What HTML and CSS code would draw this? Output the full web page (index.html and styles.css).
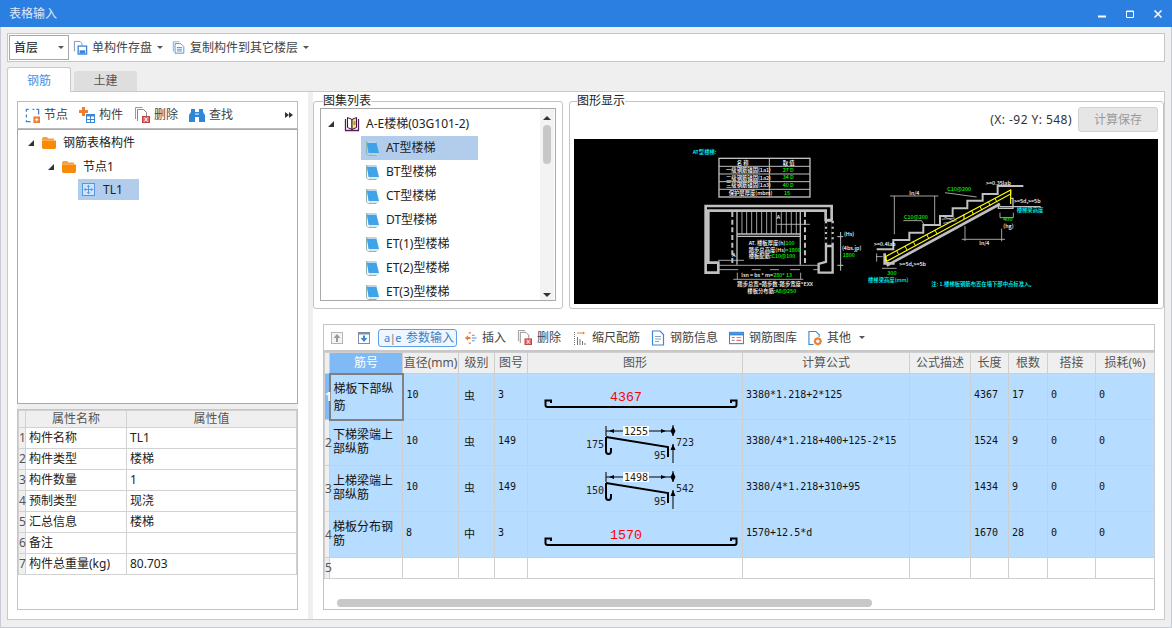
FILE: index.html
```html
<!DOCTYPE html>
<html lang="zh-CN">
<head>
    <meta charset="UTF-8">
    <title>表格输入</title>
    <link rel="stylesheet" href="styles.css">
</head>
<body>
    <!-- Shared icons -->
    <svg class="icon-defs" width="0" height="0">
        <symbol id="ic-save" viewBox="0 0 16 16">
            <path d="M1.500 12V1.500h6l2 2V6" fill="#fff" stroke="#7c93ad"/>
            <rect x="5.500" y="6.500" width="9" height="8.500" fill="#fff" stroke="#3a87d8" stroke-width="1.400"/>
            <rect x="7" y="11" width="6" height="3.500" fill="#3a87d8"/>
        </symbol>
        <symbol id="ic-copy" viewBox="0 0 16 16">
            <path d="M1.500 12.500V1.500h7" fill="none" stroke="#8ba0b8"/>
            <path d="M3.500 14.500V3.500h6.500l3.500 3.500v7.500z" fill="#fff" stroke="#4a8ad0"/>
            <path d="M5.500 8h6M5.500 10h6M5.500 12h6" stroke="#4a8ad0"/>
        </symbol>
        <symbol id="ic-node" viewBox="0 0 16 16">
            <path d="M4 1.500H1.500V4M1.500 7v3M1.500 13v1.500H6M8 1.500h2M12 1.500h2.500V7" fill="none" stroke="#3a87d8" stroke-width="1.400"/>
            <rect x="9" y="9" width="7" height="7" fill="#ef7d2e"/>
            <path d="M12.500 10.500v4M10.500 12.500h4" stroke="#fff"/>
        </symbol>
        <symbol id="ic-comp" viewBox="0 0 16 16">
            <path d="M3 0h3v3h3v3H6v3H3V6H0V3h3z" fill="#ef7d2e"/>
            <rect x="7.500" y="7.500" width="8" height="8" fill="#fff" stroke="#3a87d8"/>
            <path d="M7.500 8.500h8" stroke="#3a87d8" stroke-width="2"/>
            <path d="M7.500 12.500h8M11.500 9v6" stroke="#3a87d8"/>
        </symbol>
        <symbol id="ic-del" viewBox="0 0 16 16">
            <path d="M1.500 12V.5h7" fill="none" stroke="#9a9a9a"/>
            <path d="M3.500 14V2.500h6l3 3V9" fill="#fff" stroke="#8a8a8a"/>
            <rect x="8.500" y="9.500" width="7" height="6" fill="#e06a6a" stroke="#c04444"/>
            <path d="M10.500 10.500l3 4M13.500 10.500l-3 4" stroke="#fff"/>
        </symbol>
        <symbol id="ic-find" viewBox="0 0 16 16">
            <path d="M2 2h4v3h4V2h4v3l2 3v7h-6V10H6v5H0V8l2-3z" fill="#2f87d8"/>
            <path d="M6 7h4" stroke="#fff"/>
        </symbol>
        <symbol id="ic-folder" viewBox="0 0 14 12">
            <path d="M0 1.500 1 0h4l1.500 1.500H12v2H0z" fill="#f9a13a"/>
            <path d="M0 3.500h14v7l-1 1.500H1l-1-1.500z" fill="#f98908"/>
        </symbol>
        <symbol id="ic-tl" viewBox="0 0 14 14">
            <rect x=".5" y=".5" width="13" height="13" fill="#cfe3fa" stroke="#4a94e4"/>
            <path d="M7 2.500v9M2.500 7h9M5.500 4 7 2.500 8.500 4M5.500 10 7 11.500 8.500 10M4 5.500 2.500 7 4 8.500M10 5.500 11.500 7 10 8.500" fill="none" stroke="#4a94e4"/>
        </symbol>
        <symbol id="ic-book" viewBox="0 0 16 16">
            <path d="M1.500 3v11.500h13V3" fill="#fff" stroke="#5a1d5e" stroke-width="1.300"/>
            <path d="M3.500 1.500 8 3.500v10l-4.500-2z" fill="#fff" stroke="#3a1540"/>
            <path d="M8 3.500l4.500-2v10L8 13.500z" fill="#f5e56a" stroke="#3a1540"/>
            <path d="M9.500 6h2M9.500 8h2" stroke="#3a1540" stroke-width=".8"/>
        </symbol>
        <symbol id="ic-sheet" viewBox="0 0 15 16">
            <path d="M1.500 1h9.500L14 13H3.500z" fill="#3ea3e8"/>
            <path d="M2 1h9l.6 2H2.200z" fill="#b9d5e8"/>
            <path d="M1.500 1v13l2 1.500h8" fill="none" stroke="#92b4a8"/>
            <path d="M3.500 14h10.500" stroke="#c4d6c4"/>
        </symbol>
        <symbol id="ic-up" viewBox="0 0 12 12">
            <rect x=".5" y=".5" width="11" height="11" fill="#f4f4f4" stroke="#b5b5b5"/>
            <path d="M6 2 2.500 6H5v4h2V6h2.500z" fill="#9a9a9a"/>
        </symbol>
        <symbol id="ic-down" viewBox="0 0 12 12">
            <rect x=".5" y=".5" width="11" height="11" fill="#fff" stroke="#7e8ea0"/>
            <path d="M.5.500h11v2H.5z" fill="#7e8ea0"/>
            <path d="M6 10 2.500 6H5V3.500h2V6h2.500z" fill="#3a87d8"/>
        </symbol>
        <symbol id="ic-insert" viewBox="0 0 14 14">
            <path d="M1 7l3.500-3v2H7v2H4.500v2z" fill="#ef7d2e"/>
            <path d="M5 1.500h2.500M5 12.500h2.500" stroke="#ef7d2e" stroke-width="1.200"/>
            <path d="M8.500 7h5M8.500 4h3M8.500 10h3" stroke="#4a94e4" stroke-width="1.200"/>
        </symbol>
        <symbol id="ic-scale" viewBox="0 0 14 14">
            <path d="M1.500 1v13" stroke="#777" stroke-dasharray="1 1"/>
            <path d="M4 2h7" stroke="#ef7d2e"/>
            <path d="M10 .5 12 2l-2 1.500z" fill="#ef7d2e"/>
            <path d="M4.500 6v8M7 8v6M9.500 10v4M12 12v2" stroke="#777"/>
        </symbol>
        <symbol id="ic-info" viewBox="0 0 14 16">
            <path d="M1.500 1h7.500l3.500 3.500v10.500h-11z" fill="#fff" stroke="#3a87d8" stroke-width="1.200"/>
            <path d="M4 6.500h6M4 9h6M4 11.500h4" stroke="#8aa0b8"/>
        </symbol>
        <symbol id="ic-lib" viewBox="0 0 16 14">
            <rect x=".5" y="1" width="15" height="12" fill="#fff" stroke="#3a87d8" stroke-width="1.200"/>
            <path d="M.5 3h15" stroke="#3a87d8" stroke-width="2.400"/>
            <path d="M3 6.500h3M3 9.500h3" stroke="#777"/>
            <path d="M8 6.500h5" stroke="#ef7d2e"/>
            <path d="M8 9.500h5" stroke="#d44"/>
        </symbol>
        <symbol id="ic-other" viewBox="0 0 15 16">
            <path d="M6 15H1V1h7.500L12 4.500V7" fill="#fff" stroke="#3a87d8" stroke-width="1.200"/>
            <circle cx="10.500" cy="11.500" r="3" fill="none" stroke="#ef7d2e" stroke-width="2.200"/>
            <path d="M10.500 7v9M6 11.500h9M7.500 8.500l6 6M13.500 8.500l-6 6" stroke="#ef7d2e" stroke-dasharray="1.400 6.200"/>
        </symbol>
        <symbol id="bar-flat" viewBox="0 0 215 45">
            <path d="M23 29v-2.500h-5.500V31q0 2 2 2h187q2 0 2-2v-4.500h-5.500V29" fill="none" stroke="#000" stroke-width="2"/>
        </symbol>
        <symbol id="bar-bent" viewBox="0 0 215 45">
            <path d="M78 17 140 27v10" fill="none" stroke="#000" stroke-width="2"/>
            <path d="M78 17v14q0 3 2.500 3t2.500-3v-3" fill="none" stroke="#000" stroke-width="2"/>
            <path d="M78 6V16M78 11h67M145 5v11M145 24v19" fill="none" stroke="#000"/>
            <path d="M81 11l5-2v4zM138 11l-5-2v4z" fill="#000"/>
            <path d="M145 6l-2.500 5h5zM145 16l-2.500-5h5zM145 24l-2.500 6h5z" fill="#000"/>
        </symbol>
    </svg>

    <div class="window">
        <div class="titlebar">
            <span class="title">表格输入</span>
            <div class="win-buttons">
                <svg width="8" height="8" viewBox="0 0 8 8"><path d="M0 6.500h8" stroke="#fff" stroke-width="2"/></svg>
                <svg width="8" height="8" viewBox="0 0 8 8"><path d="M.5 1h7v6.500h-7z" fill="none" stroke="#fff"/><path d="M0 1.500h8" stroke="#fff"/></svg>
                <svg width="8" height="8" viewBox="0 0 8 8"><path d="M.5 .5l7 7M7.500 .5l-7 7" stroke="#fff" stroke-width="1.500"/></svg>
            </div>
        </div>

        <!-- Floor toolbar -->
        <div class="top-toolbar">
            <div class="floor-select">首层<span class="caret"></span></div>
            <div class="top-item">
                <svg class="icon" width="15" height="15"><use href="#ic-save"/></svg>
                <span>单构件存盘</span><span class="caret"></span>
            </div>
            <div class="top-item">
                <svg class="icon" width="14" height="15"><use href="#ic-copy"/></svg>
                <span>复制构件到其它楼层</span><span class="caret"></span>
            </div>
        </div>

        <div class="tabs">
            <div class="tab tab-active">钢筋</div>
            <div class="tab">土建</div>
        </div>

        <div class="pane">
            <!-- Left side: tree and properties -->
            <div class="left-panel">
                <div class="left-toolbar">
                    <div class="tool"><svg class="icon" width="15" height="15"><use href="#ic-node"/></svg>节点</div>
                    <div class="tool"><svg class="icon" width="16" height="16"><use href="#ic-comp"/></svg>构件</div>
                    <div class="tool"><svg class="icon" width="16" height="16"><use href="#ic-del"/></svg>删除</div>
                    <div class="tool"><svg class="icon" width="16" height="16"><use href="#ic-find"/></svg>查找</div>
                    <span class="more"></span>
                </div>
                <div class="tree">
                    <div class="tree-row"><span class="arrow"></span><svg class="folder" width="14" height="12"><use href="#ic-folder"/></svg>钢筋表格构件</div>
                    <div class="tree-row tree-level2"><span class="arrow"></span><svg class="folder" width="14" height="12"><use href="#ic-folder"/></svg>节点1</div>
                    <div class="tree-leaf"><svg width="13" height="13"><use href="#ic-tl"/></svg>TL1</div>
                </div>
                <div class="h-split"></div>
                <div class="props">
                    <table class="props-table">
                        <colgroup><col class="p-c0"><col class="p-c1"><col class="p-c2"></colgroup>
                        <thead><tr><th></th><th>属性名称</th><th>属性值</th></tr></thead>
                        <tbody>
                            <tr><th>1</th><td>构件名称</td><td>TL1</td></tr>
                            <tr><th>2</th><td>构件类型</td><td>楼梯</td></tr>
                            <tr><th>3</th><td>构件数量</td><td>1</td></tr>
                            <tr><th>4</th><td>预制类型</td><td>现浇</td></tr>
                            <tr><th>5</th><td>汇总信息</td><td>楼梯</td></tr>
                            <tr><th>6</th><td>备注</td><td></td></tr>
                            <tr><th>7</th><td>构件总重量(kg)</td><td>80.703</td></tr>
                        </tbody>
                    </table>
                </div>
            </div>

            <div class="v-split"></div>

            <div class="right-panel">
                <div class="top-row">
                    <fieldset class="group group-list">
                        <legend>图集列表</legend>
                        <div class="atlas">
                            <div class="atlas-items">
                                <div class="atlas-root"><span class="arrow"></span><svg width="16" height="16"><use href="#ic-book"/></svg>A-E楼梯(03G101-2)</div>
                                <div class="atlas-item atlas-selected"><svg width="15" height="16"><use href="#ic-sheet"/></svg>AT型楼梯</div>
                                <div class="atlas-item"><svg width="15" height="16"><use href="#ic-sheet"/></svg>BT型楼梯</div>
                                <div class="atlas-item"><svg width="15" height="16"><use href="#ic-sheet"/></svg>CT型楼梯</div>
                                <div class="atlas-item"><svg width="15" height="16"><use href="#ic-sheet"/></svg>DT型楼梯</div>
                                <div class="atlas-item"><svg width="15" height="16"><use href="#ic-sheet"/></svg>ET(1)型楼梯</div>
                                <div class="atlas-item"><svg width="15" height="16"><use href="#ic-sheet"/></svg>ET(2)型楼梯</div>
                                <div class="atlas-item"><svg width="15" height="16"><use href="#ic-sheet"/></svg>ET(3)型楼梯</div>
                            </div>
                            <div class="vscroll">
                                <span class="scroll-up"></span>
                                <span class="scroll-thumb"></span>
                                <span class="scroll-down"></span>
                            </div>
                        </div>
                    </fieldset>

                    <fieldset class="group group-drawing">
                        <legend>图形显示</legend>
                        <div class="coord-row">
                            <span class="coord">(X: -92 Y: 548)</span>
                            <button class="save-btn">计算保存</button>
                        </div>
                        <svg class="drawing" width="584" height="165" viewBox="574 139 584 165">
                            <rect x="574" y="139" width="584" height="165" fill="#000"/>
                            <!-- stair plan -->
                            <g transform="translate(570 90) scale(.3333)" fill="none" stroke="#c0c0c0">
                                <text class="cad cad-cyan" x="368" y="192">AT型楼梯:</text>
                                <rect x="447" y="205" width="273" height="116" stroke-width="4"/>
                                <path d="M447 229h273M447 252h273M447 275h273M447 298h273M598 205v116" stroke-width="3"/>
                                <text class="cad cad-white" x="500" y="224">名 称</text>
                                <text class="cad cad-white" x="638" y="224">取 值</text>
                                <text class="cad cad-white" x="468" y="246">一级钢筋锚固(1a1)</text>
                                <text class="cad cad-white" x="468" y="269">二级钢筋锚固(1a2)</text>
                                <text class="cad cad-white" x="468" y="291">三级钢筋锚固(1a3)</text>
                                <text class="cad cad-white" x="476" y="315">保护层厚度(mbm)</text>
                                <text class="cad cad-green" x="638" y="247">27 D</text>
                                <text class="cad cad-green" x="638" y="268">34 D</text>
                                <text class="cad cad-green" x="638" y="291">40 D</text>
                                <text class="cad cad-green" x="642" y="315">15</text>

                                <path d="M785 390V348H407v200h38v-30h-30V362h352v28h20" stroke-width="8"/>
                                <path d="M768 392h20M768 468h20M768 392v120M788 392v72M768 466v50l-22 6v26h42v-84" stroke-width="7"/>
                                <path d="M768 400v64M788 400v64" stroke="#000" stroke-width="8" stroke-dasharray="10 6"/>
                                <path d="M487 366v158M705 366v158" stroke-width="6" stroke-dasharray="15 8"/>
                                <path d="M501 366v158M691 366v158M501 432h190M501 439h190" stroke-width="4"/>
                                <path d="M516 366v66M530 366v66M545 366v66M560 366v66M575 366v66M590 366v66M604 366v66M619 366v66M634 366v66M649 366v66M664 366v66M679 366v66" stroke-width="2.500"/>
                                <path d="M620 403h100M444 511h78M445 526h300M445 539h60M545 539h27M600 539h27M660 539h30M730 539h16" stroke-width="2.500"/>
                                <text class="cad cad-white" x="620" y="388">A</text>
                                <text class="cad cad-white" x="487" y="500">A</text>
                                <text class="cad cad-white" x="536" y="465">AT. 楼板厚度(h)<tspan class="cad-green">100</tspan></text>
                                <text class="cad cad-white" x="536" y="485">踏步总高度(Hs)<tspan class="cad-green">=1800</tspan></text>
                                <text class="cad cad-white" x="536" y="504">楼板配筋:<tspan class="cad-green">C10@100</tspan></text>
                                <path d="M502 548v20M692 548v20M490 568h210" stroke-width="2.500"/>
                                <path d="M812 426v116M802 440h18M802 526h18" stroke-width="3"/>
                                <text class="cad cad-white" x="822" y="437">(Hs)</text>
                                <text class="cad cad-white" x="816" y="480">(4bs.jp)</text>
                                <text class="cad cad-green" x="818" y="501">1800</text>
                                <text class="cad cad-white" x="514" y="561">lsn = bs * m=<tspan class="cad-green">280* 13</tspan></text>
                                <text class="cad cad-white" x="502" y="588">踏步总宽=踏步数-踏步宽度*EXX</text>
                                <text class="cad cad-white" x="532" y="609">楼板分布筋:<tspan class="cad-green">A8@250</tspan></text>
                            </g>
                            <!-- stair section -->
                            <g transform="translate(860 90) scale(.3333)" fill="none" stroke="#c0c0c0">
                                <path d="M50 478h50v-28h48v-22h42v-23h50v-27h38v-23h44v-23h46v-20h45v-24h77" stroke-width="6"/>
                                <path d="M80 527 420 342M74 490v30h30" stroke-width="8"/>
                                <path d="M415 340v15h44v-30h-6M418 350h124" stroke-width="4"/>
                                <path d="M48 500h20M50 490v25M420 368v15h40v-15M66 535h44" stroke-width="2.500"/>
                                <path d="M90 318h145M103 318v115M224 318v85M315 408v45M425 416v38M305 448h130M255 308l95 13M130 392h55l8 14" stroke-width="2.500"/>
                                <path d="M76 500 452 300v12L80 514z" stroke="#ff0" stroke-width="3.500"/>
                                <path d="M452 300v42M312 373v14M78 500v13" stroke="#ff0" stroke-width="3.500"/>
                                <path d="M110 482l6 12M135 468l6 12M160 455l6 12M200 433l6 12M225 420l6 12M335 362l6 12M360 349l6 12M385 335l6 12M405 325l6 12" stroke="#ff0" stroke-width="3"/>
                                <path d="M245 388l40-4M250 400l40-8M250 380l30 12" stroke-width="2.500"/>
                                <text class="cad cad-green" x="262" y="304">C10@200</text>
                                <text class="cad cad-green" x="132" y="388">C10@200</text>
                                <text class="cad cad-white" x="148" y="316">ln/4</text>
                                <text class="cad cad-white" x="358" y="465">ln/4</text>
                                <text class="cad cad-white" x="378" y="286">&gt;=0.35lab</text>
                                <text class="cad cad-white" x="42" y="469">&gt;=0.4lab</text>
                                <text class="cad cad-white" x="462" y="340">&gt;=5d,&gt;=5b</text>
                                <text class="cad cad-white" x="118" y="528">&gt;=5d,&gt;=5b</text>
                                <text class="cad cad-cyan" x="470" y="366">楼梯梁高度</text>
                                <text class="cad cad-cyan" x="24" y="575">楼梯梁高度(mm)</text>
                                <text class="cad cad-green" x="430" y="393">400</text>
                                <text class="cad cad-green" x="82" y="555">300</text>
                                <text class="cad cad-white" x="430" y="415">(hg)</text>
                                <text class="cad cad-cyan" x="214" y="587">注: 1.楼梯板钢筋布置在墙下部中点标准入。</text>
                            </g>
                        </svg>
                    </fieldset>
                </div>

                <!-- Rebar grid -->
                <div class="grid-panel">
                    <div class="grid-toolbar">
                        <svg class="arrow-btn" width="12" height="12"><use href="#ic-up"/></svg>
                        <svg class="arrow-btn" width="12" height="12"><use href="#ic-down"/></svg>
                        <div class="param-btn"><span class="ae-icon">a<i>|</i>e</span>参数输入</div>
                        <div class="tool"><svg class="icon" width="13" height="14"><use href="#ic-insert"/></svg>插入</div>
                        <div class="tool"><svg class="icon" width="15" height="15"><use href="#ic-del"/></svg>删除</div>
                        <div class="tool tool-scale"><svg class="icon" width="14" height="14"><use href="#ic-scale"/></svg>缩尺配筋</div>
                        <div class="tool"><svg class="icon" width="14" height="16"><use href="#ic-info"/></svg>钢筋信息</div>
                        <div class="tool"><svg class="icon" width="15" height="14"><use href="#ic-lib"/></svg>钢筋图库</div>
                        <div class="tool"><svg class="icon" width="14" height="16"><use href="#ic-other"/></svg>其他</div>
                        <span class="caret caret-other"></span>
                    </div>
                    <table class="rebar-table">
                        <colgroup>
                            <col class="c-head"><col class="c-name"><col class="c-dia"><col class="c-grade"><col class="c-no">
                            <col class="c-shape"><col class="c-formula"><col class="c-desc"><col class="c-len">
                            <col class="c-count"><col class="c-lap"><col class="c-loss">
                        </colgroup>
                        <thead>
                            <tr>
                                <th></th><th class="col-current">筋号</th><th>直径(mm)</th><th>级别</th><th>图号</th><th>图形</th>
                                <th>计算公式</th><th>公式描述</th><th>长度</th><th>根数</th><th>搭接</th><th>损耗(%)</th>
                            </tr>
                        </thead>
                        <tbody>
                            <tr class="row-selected row-current">
                                <th class="row-head-current">1</th>
                                <td class="cell-name cell-editing">梯板下部纵筋</td>
                                <td class="num">10</td><td class="grade">虫</td><td class="num">3</td>
                                <td class="shape">
                                    <svg width="215" height="45"><use href="#bar-flat"/><text class="dim-red" x="98" y="27">4367</text></svg>
                                </td>
                                <td class="num">3380*1.218+2*125</td><td></td><td class="num">4367</td><td class="num">17</td><td class="num">0</td><td class="num">0</td>
                            </tr>
                            <tr class="row-selected">
                                <th>2</th>
                                <td class="cell-name">下梯梁端上部纵筋</td>
                                <td class="num">10</td><td class="grade">虫</td><td class="num">149</td>
                                <td class="shape">
                                    <svg width="215" height="45"><use href="#bar-bent"/>
                                        <rect class="dim-box" x="95" y="6" width="26" height="10"/>
                                        <text class="dim" x="108" y="15">1255</text>
                                        <text class="dim" x="67" y="28">175</text>
                                        <text class="dim" x="157" y="26">723</text>
                                        <text class="dim" x="132" y="39">95</text>
                                    </svg>
                                </td>
                                <td class="num">3380/4*1.218+400+125-2*15</td><td></td><td class="num">1524</td><td class="num">9</td><td class="num">0</td><td class="num">0</td>
                            </tr>
                            <tr class="row-selected">
                                <th>3</th>
                                <td class="cell-name">上梯梁端上部纵筋</td>
                                <td class="num">10</td><td class="grade">虫</td><td class="num">149</td>
                                <td class="shape">
                                    <svg width="215" height="45"><use href="#bar-bent"/>
                                        <rect class="dim-box" x="95" y="6" width="26" height="10"/>
                                        <text class="dim" x="108" y="15">1498</text>
                                        <text class="dim" x="67" y="28">150</text>
                                        <text class="dim" x="157" y="26">542</text>
                                        <text class="dim" x="132" y="39">95</text>
                                    </svg>
                                </td>
                                <td class="num">3380/4*1.218+310+95</td><td></td><td class="num">1434</td><td class="num">9</td><td class="num">0</td><td class="num">0</td>
                            </tr>
                            <tr class="row-selected">
                                <th>4</th>
                                <td class="cell-name">梯板分布钢筋</td>
                                <td class="num">8</td><td class="grade">中</td><td class="num">3</td>
                                <td class="shape">
                                    <svg width="215" height="45"><use href="#bar-flat"/><text class="dim-red" x="98" y="27">1570</text></svg>
                                </td>
                                <td class="num">1570+12.5*d</td><td></td><td class="num">1670</td><td class="num">28</td><td class="num">0</td><td class="num">0</td>
                            </tr>
                            <tr class="row-empty">
                                <th>5</th><td></td><td></td><td></td><td></td><td></td><td></td><td></td><td></td><td></td><td></td><td></td>
                            </tr>
                        </tbody>
                    </table>
                    <div class="hscroll"><span class="hscroll-thumb"></span></div>
                </div>
            </div>
        </div>
    </div>
</body>
</html>
```

FILE: styles.css
```css
/* Global */
* {
    box-sizing: border-box;
}

html, body {
    margin: 0;
    padding: 0;
    height: 628px;
    overflow: hidden;
}

body {
    font-family: "Noto Sans", "Noto Sans CJK SC", sans-serif;
    font-size: 12px;
    line-height: 16px;
    color: #222;
    background: #efefef;
}

.icon-defs {
    position: absolute;
}

.window {
    display: flex;
    flex-direction: column;
    height: 628px;
    box-shadow: inset 1px 0 0 #c8ccd6, inset -1px -1px 0 #c8ccd6;
}

/* Title bar */
.titlebar {
    display: flex;
    justify-content: space-between;
    align-items: center;
    height: 27px;
    padding: 0 10px 0 9px;
    background: #2b7fe0;
    color: #dfeafa;
}

.win-buttons {
    display: flex;
    gap: 20px;
}

/* Floor toolbar */
.top-toolbar {
    display: flex;
    align-items: center;
    height: 29px;
    margin: 6px 7px 0 7px;
    padding-left: 1px;
    background: #fff;
    border: 1px solid #c6c6ca;
    color: #444;
}

.floor-select {
    display: flex;
    align-items: center;
    justify-content: space-between;
    width: 60px;
    height: 25px;
    padding: 0 4px;
    color: #111;
    border: 1px solid #a8a8a8;
}

.top-item {
    display: flex;
    align-items: center;
    gap: 4px;
    margin-left: 4px;
}

.top-item + .top-item {
    margin-left: 9px;
}

.caret {
    display: inline-block;
    width: 0;
    height: 0;
    margin-left: 1px;
    border: 3px solid transparent;
    border-top: 3px solid #555;
    border-bottom: 0;
}

/* Tabs */
.tabs {
    display: flex;
    align-items: flex-end;
    height: 24px;
    margin-top: 5px;
    padding-left: 7px;
    gap: 3px;
}

.tab {
    width: 63px;
    height: 20px;
    line-height: 20px;
    text-align: center;
    color: #555;
    background: #dedede;
    border-radius: 3px 3px 0 0;
}

.tab-active {
    width: 64px;
    height: 25px;
    line-height: 26px;
    margin-bottom: -1px;
    color: #4a90e2;
    background: #fff;
    border: 1px solid #c9c9c9;
    border-bottom: 0;
    position: relative;
    z-index: 1;
}

/* Main pane */
.pane {
    display: flex;
    height: 529px;
    margin: 0 7px;
    background: #fff;
    border: 1px solid #c9c9cc;
}

.left-panel {
    flex: 0 0 300px;
    padding: 9px 10px 0 9px;
}

.v-split {
    flex: 0 0 5px;
    background: #efefef;
}

.h-split {
    height: 5px;
    background: #efefef;
}

.left-toolbar {
    display: flex;
    align-items: center;
    gap: 11px;
    height: 28px;
    padding-left: 7px;
    background: #fff;
    border: 1px solid #bcbcbc;
    color: #444;
}

.tool {
    display: flex;
    align-items: center;
    gap: 4px;
    white-space: nowrap;
}

/* Double arrow at the end of the left toolbar */
.more {
    width: 0;
    height: 0;
    margin-left: auto;
    margin-right: 8px;
    border: 3px solid transparent;
    border-left: 4px solid #333;
    border-right: 0;
    position: relative;
}

.more::after {
    content: "";
    position: absolute;
    left: 0;
    top: -3px;
    border: 3px solid transparent;
    border-left: 4px solid #333;
    border-right: 0;
}

/* Tree */
.tree {
    height: 275px;
    padding-top: 1px;
    background: #fff;
    border: 1px solid #a9a9a9;
}

.tree-row {
    display: flex;
    align-items: center;
    height: 24px;
    padding-left: 10px;
}

.tree-level2 {
    padding-left: 30px;
}

.folder {
    margin: 0 7px 0 8px;
}

.arrow {
    width: 0;
    height: 0;
    border-left: 6px solid transparent;
    border-bottom: 6px solid #333;
}

.tree-leaf {
    display: flex;
    align-items: center;
    gap: 8px;
    width: 61px;
    height: 21px;
    margin-left: 60px;
    padding-left: 4px;
    background: #b2cdec;
}

/* Property table */
.props {
    height: 201px;
    background: #fff;
    border: 1px solid #c4c4c4;
}

.props-table {
    width: 279px;
    table-layout: fixed;
    border-collapse: collapse;
}

.p-c0 { width: 7px; }
.p-c1 { width: 101px; }

.props-table thead th {
    height: 16px;
    font-weight: normal;
    color: #555;
    background: #efefef;
}

.props-table tbody th {
    height: 21px;
    font-weight: normal;
    color: #555;
    background: #efefef;
}

.props-table th, .props-table td {
    padding: 0;
    border: 1px solid #d2d2d2;
}

.props-table td {
    padding-left: 3px;
    white-space: nowrap;
}

/* Right side */
.right-panel {
    flex: 1;
    min-width: 0;
}

.top-row {
    display: flex;
    gap: 6px;
}

.group {
    height: 216px;
    margin: 1px 0 0;
    padding: 0 6px 6px;
    min-width: 0;
    border: 1px solid #c4c4c4;
    border-radius: 3px;
}

.group legend {
    margin-left: 3px;
    padding: 0;
    line-height: 16px;
    color: #222;
}

.group-list {
    flex: 0 0 250px;
}

.group-drawing {
    flex: 1;
    padding: 0 5px 4px 4px;
}

/* Atlas list */
.atlas {
    display: flex;
    height: 193px;
    margin-top: -1px;
    border: 1px solid #a9a9a9;
}

.atlas-items {
    flex: 1;
    overflow: hidden;
}

.atlas-root {
    display: flex;
    align-items: center;
    gap: 6px;
    height: 24px;
    margin-top: 3px;
    padding-left: 7px;
}

.atlas-root .arrow {
    margin-right: 4px;
}

.atlas-item {
    display: flex;
    align-items: center;
    gap: 6px;
    width: 117px;
    height: 24px;
    margin-left: 40px;
    padding-left: 4px;
}

.atlas-selected {
    background: #b2cdec;
}

.vscroll {
    flex: 0 0 14px;
    margin-right: 1px;
    padding-top: 7px;
    background: #f3f3f3;
    display: flex;
    flex-direction: column;
    align-items: center;
}

.scroll-up {
    border: 4px solid transparent;
    border-bottom: 4px solid #333;
    border-top: 0;
}

.scroll-thumb {
    width: 8px;
    height: 39px;
    margin-top: 5px;
    border-radius: 4px;
    background: #c8c8c8;
}

.scroll-down {
    margin-top: auto;
    margin-bottom: 3px;
    border: 4px solid transparent;
    border-top: 4px solid #333;
    border-bottom: 0;
}

/* Drawing */
.coord-row {
    display: flex;
    justify-content: flex-end;
    align-items: center;
    gap: 6px;
    height: 25px;
    margin-top: -2px;
    margin-bottom: 7px;
    color: #333;
}

.coord {
    letter-spacing: .45px;
}

.save-btn {
    width: 80px;
    height: 25px;
    padding: 0;
    font: inherit;
    color: #9a9a9a;
    background: #e6e6e6;
    border: 1px solid #cfd3d8;
    border-radius: 3px;
}

.drawing {
    display: block;
}

.cad {
    font-family: "Noto Sans CJK SC", sans-serif;
    font-size: 16px;
    font-weight: 500;
    stroke: none;
}

.cad-white { fill: #fff; }
.cad-green { fill: #00ff00; }
.cad-cyan { fill: #00ffff; }

/* Grid panel */
.grid-panel {
    width: 832px;
    height: 286px;
    margin: 15px 0 0 10px;
    background: #fff;
    border: 1px solid #c4c4c4;
}

.grid-toolbar {
    display: flex;
    align-items: center;
    gap: 11px;
    height: 27px;
    padding-left: 7px;
    color: #444;
    border-bottom: 2px solid #c8c8c8;
}

.grid-toolbar .tool {
    gap: 5px;
}

.tool-scale {
    margin-left: 1px;
}

.arrow-btn {
    margin-right: 4px;
}

.param-btn {
    display: flex;
    align-items: center;
    gap: 5px;
    width: 79px;
    height: 18px;
    margin-left: -7px;
    margin-right: -4px;
    padding-left: 5px;
    color: #3a7fc9;
    background: #eef6ff;
    border: 1px solid #5ba0e8;
    border-radius: 3px;
}

.ae-icon {
    flex: 0 0 15px;
    font-size: 11px;
    letter-spacing: -.5px;
    white-space: nowrap;
    color: #3a7fc9;
}

.ae-icon i {
    font-style: normal;
    color: #777;
}

.caret-other {
    margin-left: -3px;
}

/* Rebar table */
.rebar-table {
    width: 830px;
    table-layout: fixed;
    border-collapse: collapse;
}

.c-head { width: 5px; }
.c-name { width: 73px; }
.c-dia { width: 56px; }
.c-grade { width: 36px; }
.c-no { width: 33px; }
.c-shape { width: 215px; }
.c-formula { width: 167px; }
.c-desc { width: 61px; }
.c-len { width: 38px; }
.c-count { width: 39px; }
.c-lap { width: 48px; }
.c-loss { width: 59px; }

.rebar-table th, .rebar-table td {
    padding: 0;
    border: 1px solid #cfcfcf;
}

.rebar-table thead th {
    height: 21px;
    font-weight: normal;
    color: #555;
    background: #efefef;
    white-space: nowrap;
    overflow: hidden;
}

.rebar-table thead th.col-current {
    color: #fff;
    background: #7fbaf7;
}

.rebar-table tbody th {
    font-weight: normal;
    color: #555;
    background: #efefef;
}

.rebar-table tbody th.row-head-current {
    font-weight: bold;
    color: #fff;
    background: #7fbaf7;
}

.row-selected {
    height: 46px;
    background: #b6dcff;
}

.row-empty {
    height: 21px;
}

.cell-name {
    padding: 0 3px 1px !important;
    line-height: 14px;
    color: #111;
}

.cell-editing {
    padding-bottom: 0 !important;
    line-height: 17px;
    border: 2px solid #808080 !important;
}

.num {
    padding: 0 0 3px 3px !important;
    font-family: "DejaVu Sans Mono", monospace;
    font-size: 10px;
    color: #111;
    white-space: nowrap;
}

.grade {
    padding: 0 0 3px 5px !important;
    font-family: "Noto Sans CJK SC", sans-serif;
    font-size: 11px;
    color: #111;
}

.shape {
    overflow: hidden;
}

.shape svg {
    display: block;
}

.dim, .dim-red {
    text-anchor: middle;
}

.dim {
    font-family: "DejaVu Sans Mono", monospace;
    font-size: 10px;
    fill: #222;
}

.dim-red {
    font-family: "Liberation Mono", monospace;
    font-size: 13.300px;
    fill: #ff0000;
}

.dim-box {
    fill: #fff;
}

/* Horizontal scroll */
.hscroll {
    padding: 20px 0 0 13px;
}

.hscroll-thumb {
    display: block;
    width: 535px;
    height: 8px;
    border-radius: 4px;
    background: #c8c8c8;
}
```
